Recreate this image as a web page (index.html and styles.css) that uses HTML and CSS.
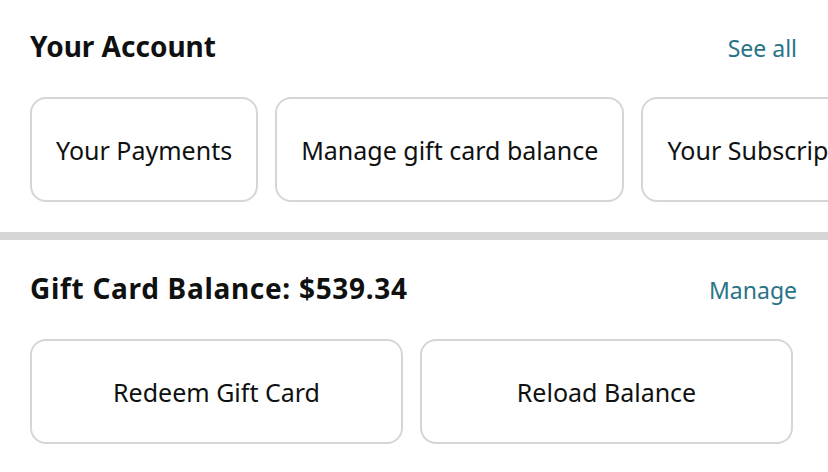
FILE: index.html
```html
<!DOCTYPE html>
<html lang="en">
<head>
  <meta charset="UTF-8" />
  <title>Your Account</title>
  <link rel="stylesheet" href="styles.css">
</head>
<body>

  <section class="section">
    <div class="section-head">
      <h2>Your Account</h2>
      <a href="#" class="link">See all</a>
    </div>
    <div class="card-row">
      <button class="card">Your Payments</button>
      <button class="card">Manage gift card balance</button>
      <button class="card">Your Subscriptions</button>
    </div>
  </section>

  <div class="divider"></div>

  <section class="section">
    <div class="section-head balance">
      <h2>Gift Card Balance: $539.34</h2>
      <a href="#" class="link">Manage</a>
    </div>
    <div class="card-grid">
      <button class="card">Redeem Gift Card</button>
      <button class="card">Reload Balance</button>
    </div>
  </section>

</body>
</html>
```

FILE: styles.css
```css
body {
  margin: 0;
  font-family: "Noto Sans", Arial, sans-serif;
  background: white;
  color: #0f1111;
  overflow: hidden;
}
.section {
  padding: 0 30px;
}
.section-head {
  display: flex;
  justify-content: space-between;
  align-items: baseline;
  height: 97px;
  padding-top: 27px;
  box-sizing: border-box;
}
.section-head.balance {
  height: 99px;
  padding-top: 29px;
}
.balance h2 {
  letter-spacing: 0.7px;
}
h2 {
  margin: 0;
  font-size: 28px;
  font-weight: bold;
}
.link {
  color: #2a7387;
  text-decoration: none;
  font-size: 23px;
  margin-right: 1px;
}
.card-row {
  display: flex;
  gap: 17px;
  margin-right: -30px;
  overflow: hidden;
}
.card-grid {
  display: grid;
  grid-template-columns: 1fr 1fr;
  gap: 17px;
  margin-right: 5px;
}
.card {
  flex-shrink: 0;
  height: 105px;
  padding: 0 24px;
  background: white;
  border: 2px solid #d6d6d6;
  border-radius: 16px;
  font-family: inherit;
  font-size: 25px;
  color: #0f1111;
  white-space: nowrap;
}
.divider {
  height: 8px;
  background: #d6d6d6;
  margin-top: 30px;
}
```
